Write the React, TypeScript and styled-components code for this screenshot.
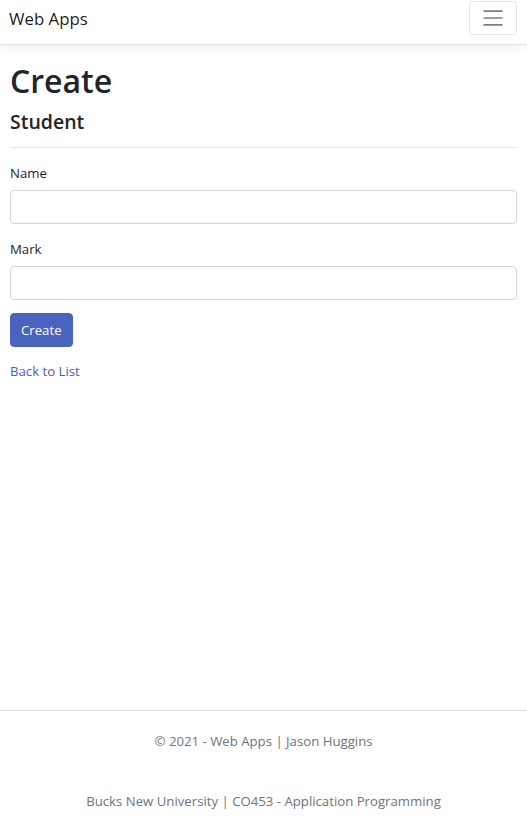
import styled, { createGlobalStyle } from 'styled-components';

const GlobalStyle = createGlobalStyle`
  html, body {
    margin: 0;
    padding: 0;
    background: #fff;
  }
  body {
    font-family: 'Open Sans', 'Noto Sans', sans-serif;
    font-size: 13.2px;
    line-height: 21px;
    color: #212529;
  }
  * {
    box-sizing: border-box;
  }
`;

const fields = ['Name', 'Mark'];

const App = () => {
  return (
    <>
      <GlobalStyle />
      <Page>
        <Navbar>
          <Brand href='#'>Web Apps</Brand>
          <Toggler aria-label='Toggle navigation'>
            <TogglerIcon viewBox='0 0 30 30'>
              <path stroke='rgba(0,0,0,0.5)' strokeWidth='2' d='M4 7h22M4 15h22M4 23h22' />
            </TogglerIcon>
          </Toggler>
        </Navbar>

        <Main>
          <Title>Create</Title>
          <Subtitle>Student</Subtitle>
          <Rule />

          <Form onSubmit={(e) => e.preventDefault()}>
            {fields.map((field) => (
              <FormGroup key={field}>
                <Label htmlFor={field}>{field}</Label>
                <Input id={field} type='text' />
              </FormGroup>
            ))}
            <SubmitButton type='submit'>Create</SubmitButton>
          </Form>

          <BackLink href='#'>Back to List</BackLink>
        </Main>

        <Footer>
          <FooterLine>© 2021 - Web Apps | Jason Huggins</FooterLine>
          <FooterLine>Bucks New University | CO453 - Application Programming</FooterLine>
        </Footer>
      </Page>
    </>
  );
};

const Page = styled.div`
  display: flex;
  flex-direction: column;
  min-height: 826px;
`;

const Navbar = styled.nav`
  display: flex;
  align-items: center;
  justify-content: space-between;
  height: 45px;
  padding: 0 10px 6px 9px;
  padding-top: 4px;
  background: #fff;
  border-bottom: 1px solid #dee2e6;
  box-shadow: 0 4px 12px rgba(0, 0, 0, 0.05);
`;

const Brand = styled.a`
  font-size: 16.8px;
  color: rgba(0, 0, 0, 0.9);
  text-decoration: none;
  line-height: 26px;
  margin-top: -4px;
`;

const Toggler = styled.button`
  display: flex;
  align-items: center;
  justify-content: center;
  width: 48px;
  height: 34px;
  margin-top: -7px;
  padding: 0;
  background: transparent;
  border: 1px solid rgba(0, 0, 0, 0.1);
  border-radius: 4px;
`;

const TogglerIcon = styled.svg`
  width: 26px;
  height: 26px;
`;

const Main = styled.main`
  flex: 1;
  padding: 15px 10px 0;
`;

const Title = styled.h1`
  margin: 0 0 7px;
  font-size: 32px;
  font-weight: 600;
  line-height: 42px;
  color: #212529;
`;

const Subtitle = styled.h4`
  margin: 0 0 7px;
  font-size: 19.5px;
  font-weight: 600;
  line-height: 25px;
`;

const Rule = styled.hr`
  margin: 13px 0 14px;
  border: 0;
  border-top: 1px solid rgba(0, 0, 0, 0.1);
`;

const Form = styled.form`
  display: flex;
  flex-direction: column;
  align-items: flex-start;
`;

const FormGroup = styled.div`
  width: 100%;
  margin-bottom: 14px;
`;

const Label = styled.label`
  display: block;
  margin-bottom: 6px;
  padding-top: 1px;
`;

const Input = styled.input`
  display: block;
  width: 100%;
  height: 34px;
  padding: 5px 10px;
  font: inherit;
  color: #495057;
  background: #fff;
  border: 1px solid #ced4da;
  border-radius: 4px;
`;

const SubmitButton = styled.button`
  height: 34px;
  margin-top: -1px;
  padding: 5px 10px;
  font: inherit;
  color: #fff;
  background: #4a63bf;
  border: 1px solid #4a63bf;
  border-radius: 4px;
`;

const BackLink = styled.a`
  display: inline-block;
  margin-top: 14px;
  color: #4c5cbf;
  text-decoration: none;
`;

const Footer = styled.footer`
  display: flex;
  flex-direction: column;
  align-items: center;
  gap: 39px;
  padding: 20px 0 14px;
  border-top: 1px solid #dee2e6;
  color: #6c757d;
`;

const FooterLine = styled.p`
  margin: 0;
  line-height: 21px;
`;

export default App;
